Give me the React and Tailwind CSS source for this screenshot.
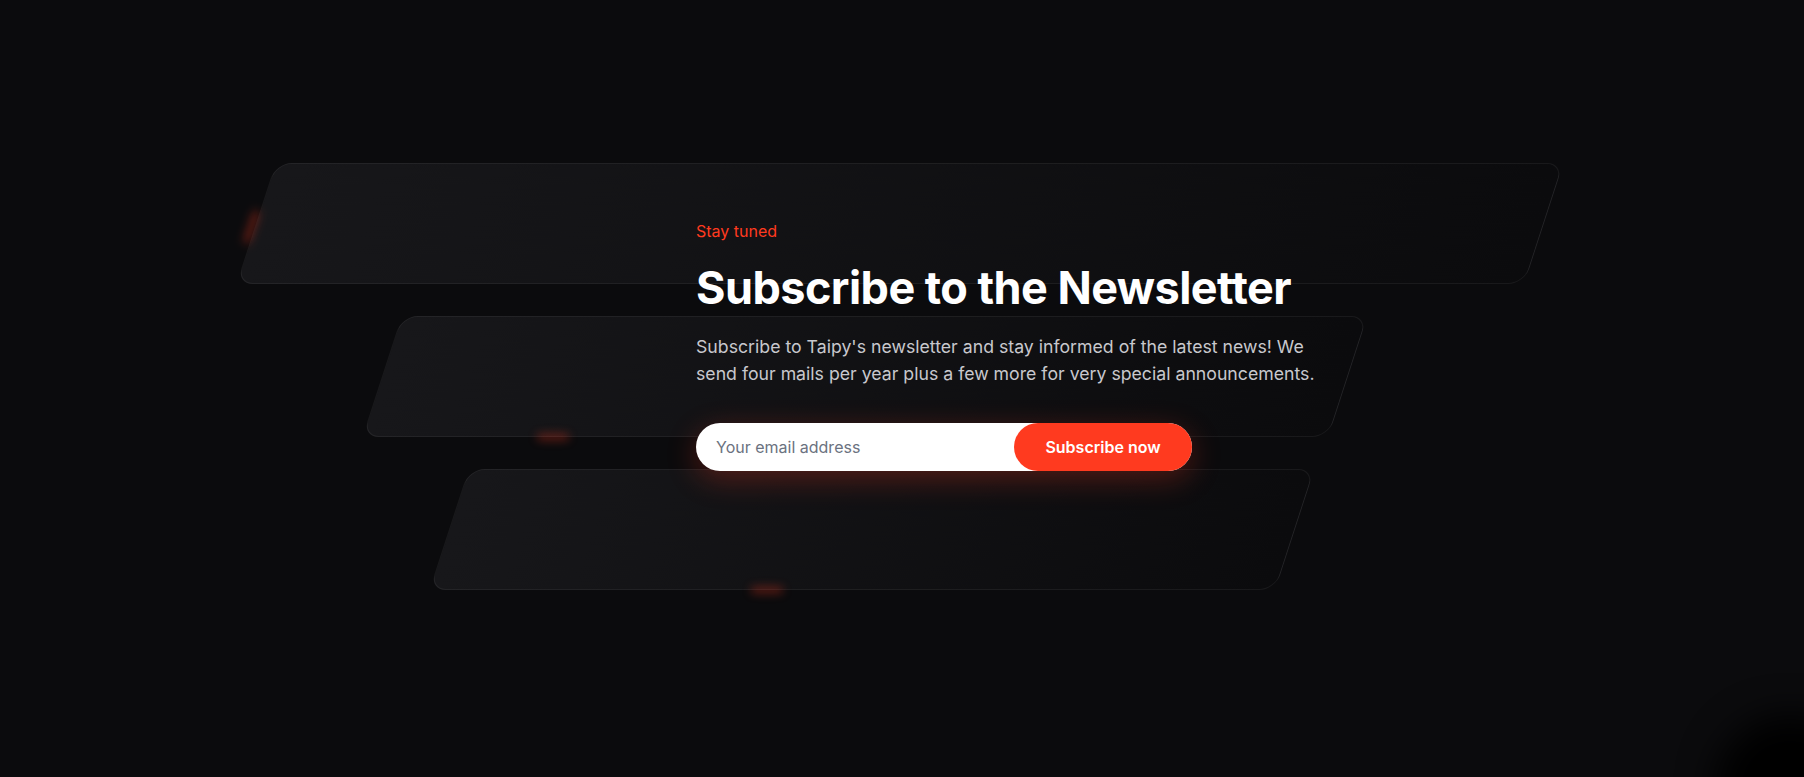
export default function App() {
  return (
    <div className="relative w-full h-[777px] overflow-hidden bg-[#0b0b0d] font-['Inter',sans-serif]">
      {/* decorative parallelograms */}
      <div className="absolute inset-0 pointer-events-none">
        <div className="flex flex-col gap-8 pt-[163px]">
          <div className="ml-[256px] w-[1288px] h-[121px] rounded-2xl border border-white/[0.06] bg-linear-to-r from-[#17171a] to-[#0b0b0d] [transform:skewX(-18deg)]" />
          <div className="ml-[382px] w-[966px] h-[121px] rounded-2xl border border-white/[0.06] bg-linear-to-r from-[#17171a] to-[#0b0b0d] [transform:skewX(-18deg)]" />
          <div className="ml-[449px] w-[846px] h-[121px] rounded-2xl border border-white/[0.06] bg-linear-to-r from-[#17171a] to-[#0b0b0d] [transform:skewX(-18deg)]" />
        </div>
        {/* glow spots */}
        <div className="absolute left-[249px] top-[210px] w-[5px] h-[34px] rounded-full bg-[#ff3a1f]/50 blur-[5px] [transform:rotate(19deg)]" />
        <div className="absolute left-[537px] top-[434px] w-[32px] h-[6px] rounded-full bg-[#ff3a1f]/40 blur-[5px]" />
        <div className="absolute left-[751px] top-[587px] w-[32px] h-[6px] rounded-full bg-[#ff3a1f]/40 blur-[5px]" />
        <div className="absolute left-[1715px] top-[715px] w-[150px] h-[150px] rounded-full bg-black blur-[18px]" />
      </div>

      {/* content */}
      <div className="relative pl-[696px] pt-[219px]">
        <p className="text-[16px] leading-6 text-[#ff3a1f]">Stay tuned</p>
        <h2 className="mt-5 text-[45px] leading-[1.1] font-bold tracking-[-0.012em] text-white">
          Subscribe to the Newsletter
        </h2>
        <p className="mt-5 w-[640px] text-[17.7px] leading-[27px] text-[#c8c8cd]">
          Subscribe to Taipy's newsletter and stay informed of the latest news! We send four mails per year plus a few more for very special announcements.
        </p>
        <form
          className="mt-9 flex w-[496px] h-[48px] rounded-full bg-white shadow-[0_8px_30px_rgba(255,58,31,0.28)]"
          onSubmit={(e) => e.preventDefault()}
        >
          <input
            type="email"
            placeholder="Your email address"
            className="flex-1 min-w-0 rounded-full bg-transparent pl-5 text-[16px] text-[#111] placeholder:text-[#6b7280] outline-none"
          />
          <button
            type="submit"
            className="w-[178px] shrink-0 rounded-full bg-[#ff3a1f] text-white font-semibold text-[16px]"
          >
            Subscribe now
          </button>
        </form>
      </div>
    </div>
  );
}
